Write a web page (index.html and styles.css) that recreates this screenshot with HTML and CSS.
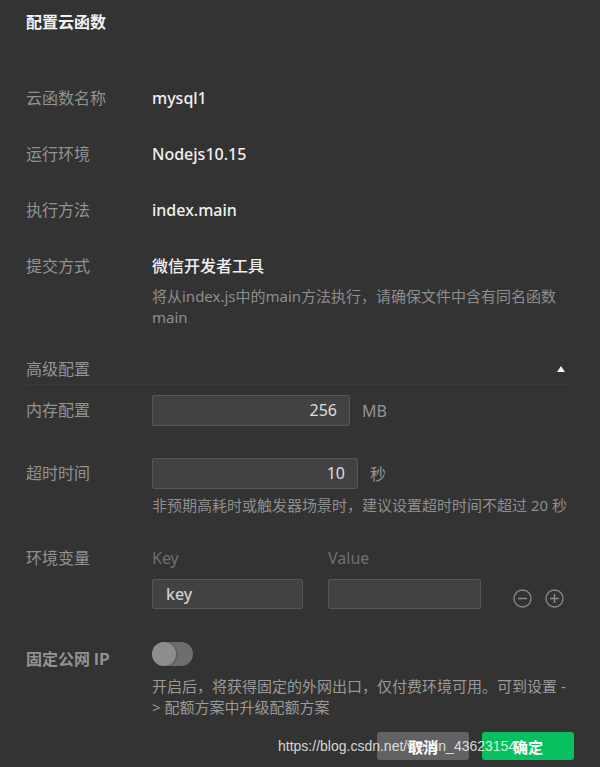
FILE: index.html
```html
<!DOCTYPE html>
<html lang="zh-CN">
<head>
    <meta charset="UTF-8">
    <title>配置云函数</title>
    <link rel="stylesheet" href="styles.css">
</head>
<body>
    <div class="dialog">
        <h1 class="title">配置云函数</h1>

        <div class="row">
            <span class="label">云函数名称</span>
            <span class="value">mysql1</span>
        </div>
        <div class="row">
            <span class="label">运行环境</span>
            <span class="value">Nodejs10.15</span>
        </div>
        <div class="row">
            <span class="label">执行方法</span>
            <span class="value">index.main</span>
        </div>
        <div class="row">
            <span class="label">提交方式</span>
            <div class="field">
                <span class="value">微信开发者工具</span>
                <p class="desc">将从index.js中的main方法执行，请确保文件中含有同名函数 main</p>
            </div>
        </div>

        <div class="section">
            <span class="label">高级配置</span>
            <span class="arrow"></span>
        </div>

        <div class="row row-input row-mem">
            <span class="label">内存配置</span>
            <div class="inline">
                <div class="input input-mem">256</div>
                <span class="unit">MB</span>
            </div>
        </div>
        <div class="row row-input row-time">
            <span class="label">超时时间</span>
            <div class="field">
                <div class="inline">
                    <div class="input input-time">10</div>
                    <span class="unit">秒</span>
                </div>
                <p class="hint">非预期高耗时或触发器场景时，建议设置超时时间不超过 20 秒</p>
            </div>
        </div>

        <div class="row row-env">
            <span class="label">环境变量</span>
            <div class="env">
                <div class="env-col">
                    <span class="env-head">Key</span>
                    <div class="input input-key">key</div>
                </div>
                <div class="env-col">
                    <span class="env-head">Value</span>
                    <div class="input input-val"></div>
                </div>
                <div class="env-ops">
                    <svg width="19" height="19" viewBox="0 0 19 19"><circle cx="9.5" cy="9.5" r="8.5" fill="none" stroke="#8a8a8a" stroke-width="1.3"/><path d="M5 9.5h9" stroke="#8a8a8a" stroke-width="1.5"/></svg>
                    <svg width="19" height="19" viewBox="0 0 19 19"><circle cx="9.5" cy="9.5" r="8.5" fill="none" stroke="#8a8a8a" stroke-width="1.3"/><path d="M5 9.5h9M9.5 5v9" stroke="#8a8a8a" stroke-width="1.5"/></svg>
                </div>
            </div>
        </div>

        <div class="row row-ip">
            <span class="label label-ip">固定公网 IP</span>
            <div class="field">
                <div class="switch"><span class="knob"></span></div>
                <p class="desc desc-ip">开启后，将获得固定的外网出口，仅付费环境可用。可到设置 -&gt; 配额方案中升级配额方案</p>
            </div>
        </div>

        <div class="footer">
            <button class="btn btn-cancel">取消</button>
            <button class="btn btn-ok">确定</button>
        </div>
    </div>
    <div class="watermark">https://blog.csdn.net/weixin_43623154</div>
</body>
</html>
```

FILE: styles.css
```css
* {
    margin: 0;
    padding: 0;
    box-sizing: border-box;
}
body {
    background: #333333;
    font-family: "Noto Sans", "Noto Sans CJK SC", sans-serif;
    font-size: 16px;
    color: #e6e6e6;
}
.dialog {
    position: relative;
    padding: 12px 32px 0 26px;
    height: 767px;
}
.title {
    font-size: 16px;
    font-weight: bold;
    line-height: 20px;
    color: #f2f2f2;
    margin-bottom: 56px;
}
.row {
    display: grid;
    grid-template-columns: 126px 1fr;
    line-height: 20px;
    margin-bottom: 36px;
}
.label {
    color: #929292;
}
.value {
    color: #f0f0f0;
    font-weight: 500;
}
.desc {
    margin-top: 10px;
    font-size: 15px;
    line-height: 21px;
    color: #8e8e8e;
}
.section {
    display: flex;
    justify-content: space-between;
    align-items: center;
    line-height: 20px;
    margin-top: -5px;
    padding-bottom: 5px;
    border-bottom: 1px solid #3b3b3b;
}
.arrow {
    width: 0;
    height: 0;
    margin-right: 3px;
    border-left: 4px solid transparent;
    border-right: 4px solid transparent;
    border-bottom: 6px solid #f0f0f0;
}
.row-input {
    align-items: start;
    margin-bottom: 0;
}
.row-input .label {
    line-height: 31px;
}
.row-mem {
    margin-top: 10px;
}
.row-time {
    margin-top: 32px;
}
.inline {
    display: flex;
    align-items: center;
}
.input {
    height: 31px;
    background: #424242;
    border: 1px solid #575757;
    border-radius: 2px;
    color: #dedede;
    line-height: 29px;
}
.input-mem {
    width: 198px;
    text-align: right;
    padding-right: 12px;
}
.input-time {
    width: 206px;
    text-align: right;
    padding-right: 12px;
}
.unit {
    margin-left: 12px;
    color: #949494;
}
.hint {
    margin-top: 6px;
    font-size: 15px;
    line-height: 20px;
    color: #8e8e8e;
    white-space: nowrap;
}
.row-env {
    margin-top: 33px;
    margin-bottom: 0;
}
.env {
    display: flex;
    align-items: flex-end;
}
.env-col {
    display: flex;
    flex-direction: column;
    margin-right: 25px;
}
.env-head {
    color: #6f6f6f;
    margin-bottom: 11px;
}
.input-key {
    width: 151px;
    height: 30px;
    line-height: 28px;
    padding-left: 13px;
    font-weight: 500;
    color: #cfcfcf;
}
.input-val {
    width: 153px;
    height: 30px;
}
.env-ops {
    display: flex;
    gap: 13px;
    margin-left: 7px;
    margin-bottom: 1px;
}
.env-ops svg {
    display: block;
}
.row-ip {
    margin-top: 33px;
    margin-bottom: 0;
}
.label-ip {
    padding-top: 6px;
    font-family: "Noto Sans CJK SC", sans-serif;
    font-weight: bold;
}
.switch {
    position: relative;
    width: 41px;
    height: 24px;
    border-radius: 12px;
    background: #6e6e6e;
}
.knob {
    position: absolute;
    left: 0;
    top: 0;
    width: 24px;
    height: 24px;
    border-radius: 50%;
    background: #8d8d8d;
    box-shadow: 1px 0 2px rgba(0, 0, 0, 0.25);
}
.desc-ip {
    margin-top: 10px;
    color: #9a9a9a;
}
.footer {
    display: flex;
    justify-content: flex-end;
    gap: 13px;
    margin-top: 14px;
    margin-right: -6px;
}
.btn {
    width: 92px;
    height: 28px;
    border: none;
    border-radius: 3px;
    font-family: "Noto Sans", "Noto Sans CJK SC", sans-serif;
    font-size: 15px;
    font-weight: bold;
    color: #ffffff;
}
.btn-cancel {
    background: #626262;
}
.btn-ok {
    background: #07c160;
}
.watermark {
    position: absolute;
    z-index: 2;
    left: 278px;
    top: 737px;
    font-family: "Liberation Sans", Arial, sans-serif;
    font-size: 14px;
    line-height: 18px;
    color: rgba(255, 255, 255, 0.8);
}
```
